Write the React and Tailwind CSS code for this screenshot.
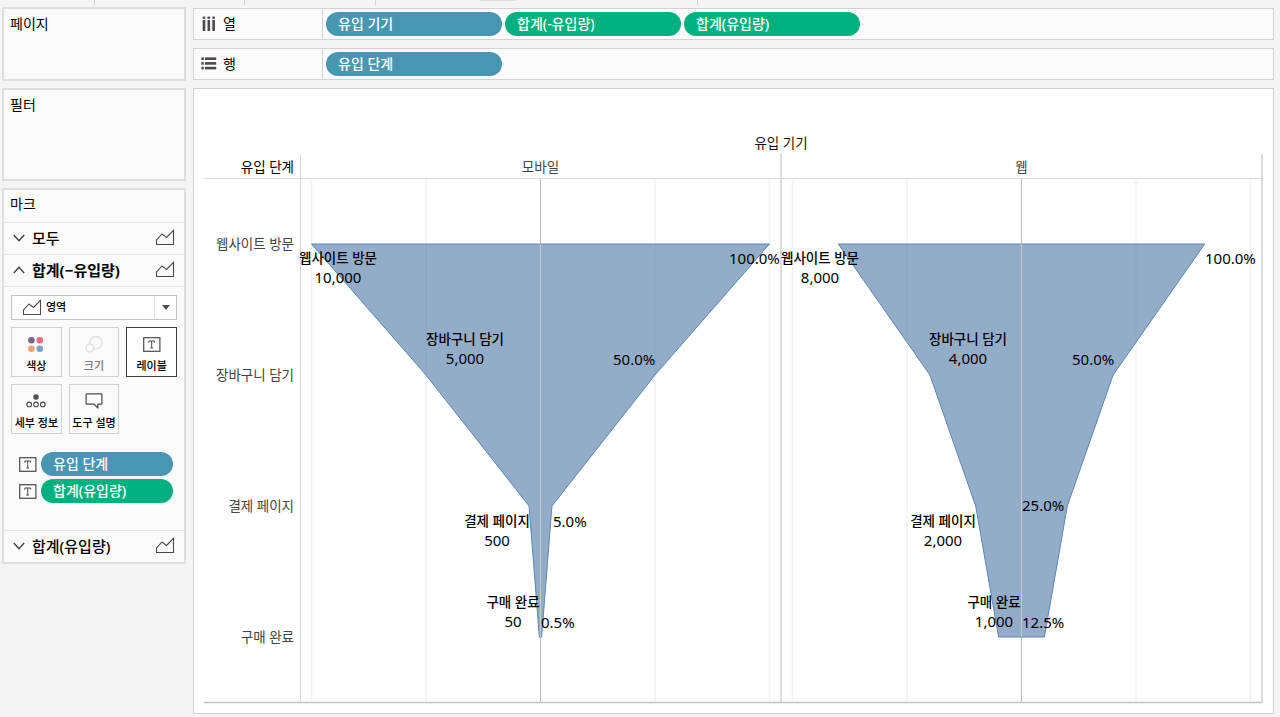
import React from "react";

const FONT = "font-['Noto_Sans','Noto_Sans_CJK_KR',sans-serif]";

function AreaIcon() {
  return (
    <svg width="20" height="18" viewBox="0 0 20 18" fill="none" stroke="#4a4a4a" strokeWidth="1.1" aria-hidden="true">
      <path d="M1.5 15.5V11L7 5L11.5 8.5L18.5 1.3V15.5Z" />
    </svg>
  );
}

function Chevron({ up }) {
  return (
    <svg width="12" height="8" viewBox="0 0 12 8" fill="none" stroke="#3c3c3c" strokeWidth="1.3" aria-hidden="true">
      <path d={up ? "M0.8 7L6 1.2L11.2 7" : "M0.8 1L6 6.8L11.2 1"} />
    </svg>
  );
}

function LabelIcon() {
  return (
    <svg width="18" height="15" viewBox="0 0 18 15" fill="none" stroke="#4a4a4a" aria-hidden="true">
      <rect x="0.7" y="0.7" width="16.2" height="13.6" strokeWidth="1.2" />
      <path d="M5.8 5.6V4H11.6V5.6M8.7 4V11M7.3 11H10.1" strokeWidth="1" />
    </svg>
  );
}

function ColorIcon() {
  return (
    <svg width="18" height="17" viewBox="0 0 18 17" aria-hidden="true">
      <circle cx="4.4" cy="4.3" r="3.3" fill="#7a6490" />
      <circle cx="12.8" cy="4.3" r="3.3" fill="#f4697a" />
      <circle cx="4.4" cy="12.7" r="3.3" fill="#f0a274" />
      <circle cx="12.8" cy="12.7" r="3.3" fill="#7aa0c8" />
    </svg>
  );
}

function SizeIcon() {
  return (
    <svg width="18" height="17" viewBox="0 0 18 17" fill="#fafafa" stroke="#dcdcdc" strokeWidth="1.2" aria-hidden="true">
      <circle cx="10.8" cy="6.8" r="6.2" />
      <circle cx="5" cy="12" r="3.9" />
    </svg>
  );
}

function DetailIcon() {
  return (
    <svg width="20" height="14" viewBox="0 0 20 14" fill="none" stroke="#4a4a4a" strokeWidth="1.1" aria-hidden="true">
      <circle cx="10" cy="3" r="2.2" fill="#555" />
      <circle cx="3.2" cy="10.4" r="2.3" />
      <circle cx="10" cy="10.4" r="2.3" />
      <circle cx="16.8" cy="10.4" r="2.3" />
    </svg>
  );
}

function TooltipIcon() {
  return (
    <svg width="18" height="16" viewBox="0 0 18 16" fill="none" stroke="#4a4a4a" strokeWidth="1.2" strokeLinejoin="round" aria-hidden="true">
      <path d="M1.8 0.9H16.2Q16.9 0.9 16.9 1.6V10.4Q16.9 11.1 16.2 11.1H12.8V15L9 11.1H1.8Q1.1 11.1 1.1 10.4V1.6Q1.1 0.9 1.8 0.9Z" />
    </svg>
  );
}

function ColumnsIcon() {
  return (
    <svg width="14" height="16" viewBox="0 0 14 16" fill="#4a4a4a" aria-hidden="true">
      {[0.7, 5.5, 10.3].map((x) => (
        <g key={x}>
          <rect x={x} y="0.6" width="2.6" height="2.2" />
          <rect x={x} y="4" width="2.6" height="11" />
        </g>
      ))}
    </svg>
  );
}

function RowsIcon() {
  return (
    <svg width="16" height="14" viewBox="0 0 16 14" fill="#4a4a4a" aria-hidden="true">
      {[0.4, 5.1, 9.8].map((y) => (
        <g key={y}>
          <rect x="0.4" y={y} width="2.4" height="2.6" />
          <rect x="4" y={y} width="11.2" height="2.6" />
        </g>
      ))}
    </svg>
  );
}

function Pill({ kind, wide, children }) {
  return (
    <button
      type="button"
      className={`flex h-6 items-center rounded-full px-3 pb-px text-sm leading-5 font-medium text-white ${
        kind === "measure" ? "bg-[#00b180]" : "bg-[#4996b2]"
      } ${wide ? "w-44" : "flex-1"}`}
    >
      {children}
    </button>
  );
}

function Shelf({ icon, label, children }) {
  return (
    <section className="flex h-8 border border-[#d2d2d2] bg-[#fafafa]">
      <h2 className="flex w-[129px] items-center gap-[6px] border-r border-[#d2d2d2] pb-px pl-[7px] text-sm leading-5">
        <span className="flex w-4 justify-center">{icon}</span>
        {label}
      </h2>
      <div className="flex items-center gap-[3px] pl-[3px]">{children}</div>
    </section>
  );
}

function MarksRow({ label, open, bold, last }) {
  return (
    <button
      type="button"
      aria-expanded={Boolean(open)}
      className={`flex h-8 w-full items-center border-[#e6e6e6] pr-[9px] pb-px pl-[9px] text-[15px] leading-5 ${
        last ? "border-t" : "border-b"
      } ${bold ? "font-bold" : "font-medium"}`}
    >
      <Chevron up={open} />
      <span className="flex-1 pl-[7px] text-left">{label}</span>
      <AreaIcon />
    </button>
  );
}

function MarkButton({ icon, label, selected, disabled }) {
  return (
    <button
      type="button"
      disabled={disabled}
      className={`flex h-[50px] flex-col items-center justify-between border pt-[7px] pb-[2px] text-[11px] leading-4 font-medium whitespace-nowrap ${
        selected ? "border-[#3c3c3c] bg-white" : "border-[#d0d0d0] bg-[#fafafa]"
      } ${disabled ? "text-[#787878]" : "text-black"}`}
    >
      <span className="flex h-[18px] items-center">{icon}</span>
      {label}
    </button>
  );
}

const STAGES = [
  { name: "웹사이트 방문", y: 244 },
  { name: "장바구니 담기", y: 375 },
  { name: "결제 페이지", y: 506 },
  { name: "구매 완료", y: 637 },
];

const PANES = [
  {
    device: "모바일",
    center: 540.5,
    values: [10000, 5000, 500, 50],
    counts: [
      { text: "10,000", x: 338, y: 259 },
      { text: "5,000", x: 465, y: 340 },
      { text: "500", x: 497, y: 522 },
      { text: "50", x: 513, y: 603 },
    ],
    rates: [
      { text: "100.0%", x: 729, y: 264 },
      { text: "50.0%", x: 613, y: 365 },
      { text: "5.0%", x: 553, y: 527 },
      { text: "0.5%", x: 541, y: 628 },
    ],
  },
  {
    device: "웹",
    center: 1021.5,
    values: [8000, 4000, 2000, 1000],
    counts: [
      { text: "8,000", x: 820, y: 259 },
      { text: "4,000", x: 968, y: 340 },
      { text: "2,000", x: 943, y: 522 },
      { text: "1,000", x: 994, y: 603 },
    ],
    rates: [
      { text: "100.0%", x: 1205, y: 264 },
      { text: "50.0%", x: 1072, y: 365 },
      { text: "25.0%", x: 1022, y: 511 },
      { text: "12.5%", x: 1022, y: 628 },
    ],
  },
];

const scale = (v) => (v / 10000) * 229;

function Pane({ pane }) {
  const { center, values } = pane;
  const left = values.map((v, i) => `${center - scale(v)},${STAGES[i].y}`);
  const right = values.map((v, i) => `${center + scale(v)},${STAGES[i].y}`).reverse();
  return (
    <g>
      {[-10000, -5000, 5000, 10000].map((v) => (
        <line key={v} x1={center + scale(v)} x2={center + scale(v)} y1="179" y2="702" stroke="#f2f2f2" strokeWidth="1.5" />
      ))}
      <line x1={center} x2={center} y1="179" y2="702" stroke="#b8b8b8" />
      <polygon points={[...left, ...right].join(" ")} fill="#4e79a7" fillOpacity="0.61" stroke="#5b86b2" strokeWidth="1" />
      <line x1={center} x2={center} y1="244" y2="637" stroke="#c6c8ca" />
      <text x={center} y="172" textAnchor="middle" fontSize="13.5" fill="#444">{pane.device}</text>
    </g>
  );
}

function PaneLabels({ pane }) {
  return (
    <g fill="#000">
      {pane.counts.map((c, i) => (
        <g key={c.text} textAnchor="middle">
          <text x={c.x} y={c.y + 4} fontSize="13.5" fontWeight="500">{STAGES[i].name}</text>
          <text x={c.x} y={c.y + 24} fontSize="15">{c.text}</text>
        </g>
      ))}
      {pane.rates.map((r) => (
        <text key={r.text} x={r.x} y={r.y} fontSize="15">{r.text}</text>
      ))}
    </g>
  );
}

function FunnelChart() {
  return (
    <svg viewBox="194 89 1079 624" className="block h-auto w-full" role="img" aria-label="유입 기기">
      <text x="781" y="148" textAnchor="middle" fontSize="13.5" fill="#111">유입 기기</text>
      <text x="294" y="172" textAnchor="end" fontSize="13.5" fill="#000">유입 단계</text>
      {STAGES.map((s) => (
        <text key={s.name} x="294" y={s.y + 5} textAnchor="end" fontSize="13.5" fill="#444">{s.name}</text>
      ))}
      {PANES.map((p) => <Pane key={p.device} pane={p} />)}
      <line x1="204" x2="1262" y1="178.5" y2="178.5" stroke="#dadada" />
      <line x1="300.5" x2="300.5" y1="154" y2="702" stroke="#d6d6d6" />
      <line x1="781" x2="781" y1="154" y2="702" stroke="#d0d0d0" strokeWidth="1.5" />
      <line x1="1262" x2="1262" y1="154" y2="703" stroke="#d0d0d0" strokeWidth="1.5" />
      <line x1="204" x2="1262" y1="702.5" y2="702.5" stroke="#c2c2c2" strokeWidth="1.3" />
      {PANES.map((p) => <PaneLabels key={p.device} pane={p} />)}
    </svg>
  );
}

export default function App() {
  return (
    <div className={`min-h-screen bg-[#f4f4f4] text-black ${FONT}`}>
      <div className="flex h-[7px] items-start">
        <div className="h-[5px] w-[95px] border-r border-[#d0d0d0]" />
        <div className="h-[5px] w-[150px] border-r border-[#d0d0d0]" />
        <div className="h-[5px] w-[131px] border-r border-[#d0d0d0]" />
        <div className="flex h-[5px] w-[322px] border-r border-[#d0d0d0] pl-[104px]">
          <div className="h-px w-9 bg-[#dcdcdc]" />
        </div>
      </div>
      <div className="flex items-start gap-[7px] pr-[6px] pl-[2px]">
        <aside className="flex w-[184px] shrink-0 flex-col gap-[7px]">
          <section className="h-[74px] border-2 border-[#dedede] bg-[#fafafa] px-[6px] pt-[5px]">
            <h2 className="text-sm leading-5">페이지</h2>
          </section>
          <section className="h-[93px] border-2 border-[#dedede] bg-[#fafafa] px-[6px] pt-[5px]">
            <h2 className="text-sm leading-5">필터</h2>
          </section>
          <section className="border-2 border-[#dedede] bg-[#fafafa]">
            <h2 className="h-[33px] border-b border-[#e6e6e6] px-[6px] pt-[4px] text-sm leading-5">마크</h2>
            <MarksRow label="모두" />
            <MarksRow label="합계(−유입량)" open bold />
            <div className="px-[7px] pt-2 pb-[27px]">
              <div className="relative text-[#4a4a4a]">
                <select aria-label="마크 유형" className="block h-[25px] w-full appearance-none border border-[#c4c4c4] bg-white pb-px pl-[34px] text-[11px] font-medium text-black">
                  <option>영역</option>
                </select>
                <span className="pointer-events-none absolute inset-y-0 left-[11px] flex items-center">
                  <AreaIcon />
                </span>
                <span className="pointer-events-none absolute inset-y-px right-px flex w-[22px] items-center justify-center border-l border-[#dedede]">
                  <svg width="8" height="5" viewBox="0 0 8 5" fill="#505050" aria-hidden="true"><path d="M0 0H8L4 5Z" /></svg>
                </span>
              </div>
              <div className="grid grid-cols-3 gap-[7px] pt-[7px]">
                <MarkButton icon={<ColorIcon />} label="색상" />
                <MarkButton icon={<SizeIcon />} label="크기" disabled />
                <MarkButton icon={<LabelIcon />} label="레이블" selected />
                <MarkButton icon={<DetailIcon />} label="세부 정보" />
                <MarkButton icon={<TooltipIcon />} label="도구 설명" />
              </div>
              <div className="flex flex-col gap-[3px] pt-[18px] pr-1 pl-2">
                <div className="flex items-center gap-1">
                  <LabelIcon />
                  <Pill kind="dimension">유입 단계</Pill>
                </div>
                <div className="flex items-center gap-1">
                  <LabelIcon />
                  <Pill kind="measure">합계(유입량)</Pill>
                </div>
              </div>
            </div>
            <MarksRow label="합계(유입량)" last />
          </section>
        </aside>
        <main className="flex min-w-0 flex-1 flex-col gap-2 pt-px">
          <Shelf icon={<ColumnsIcon />} label="열">
            <Pill kind="dimension" wide>유입 기기</Pill>
            <Pill kind="measure" wide>합계(-유입량)</Pill>
            <Pill kind="measure" wide>합계(유입량)</Pill>
          </Shelf>
          <Shelf icon={<RowsIcon />} label="행">
            <Pill kind="dimension" wide>유입 단계</Pill>
          </Shelf>
          <section className="border border-[#d0d0d0] bg-white">
            <FunnelChart />
          </section>
        </main>
      </div>
    </div>
  );
}
